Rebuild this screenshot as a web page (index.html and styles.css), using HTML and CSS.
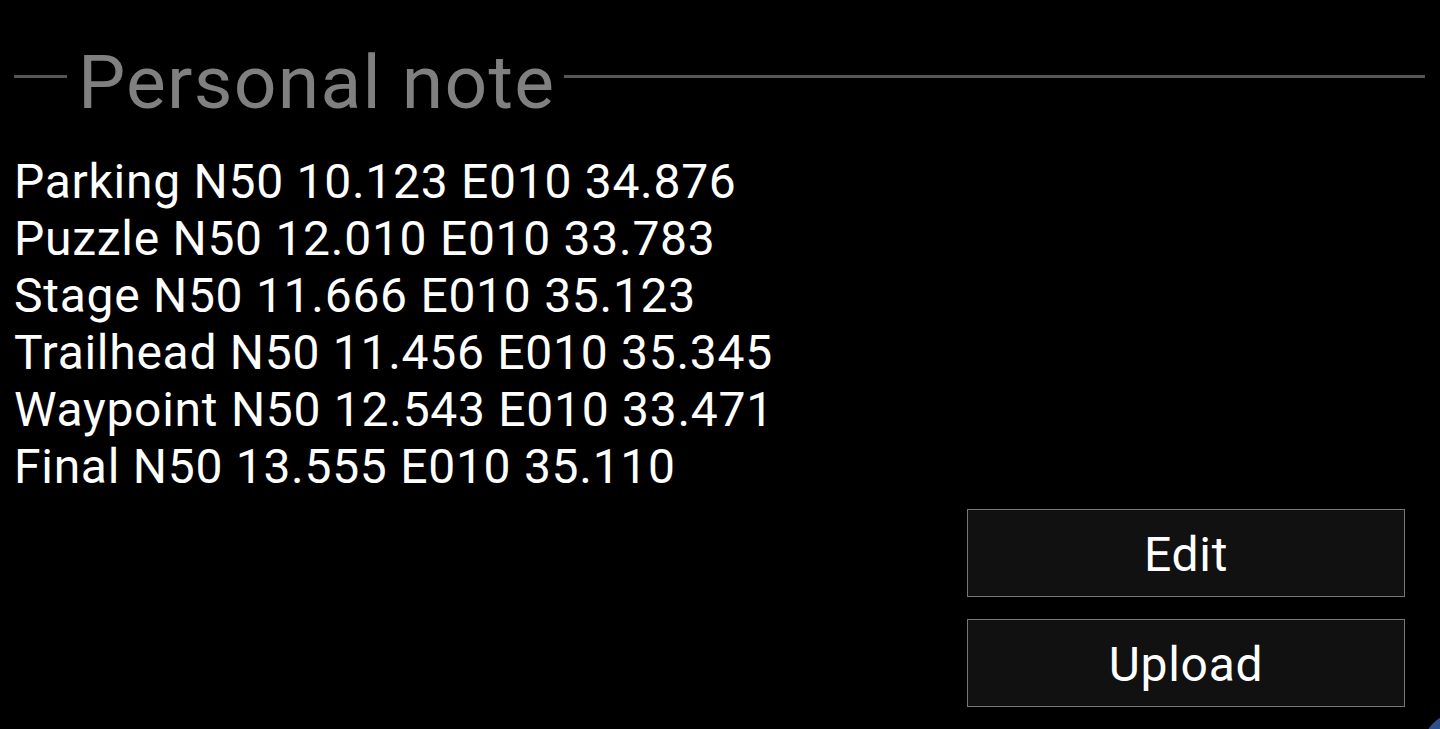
FILE: index.html
```html
<!DOCTYPE html>
<html lang="en">
<head>
<meta charset="utf-8">
<title>Personal note</title>
<link rel="stylesheet" href="styles.css">
</head>
<body>
<main class="screen">
  <header class="section-head">
    <span class="rule rule-left"></span>
    <h1 class="section-title">Personal note</h1>
    <span class="rule rule-right"></span>
  </header>
  <div class="note">
    <div class="note-line">Parking N50 10.123 E010 34.876</div>
    <div class="note-line">Puzzle N50 12.010 E010 33.783</div>
    <div class="note-line">Stage N50 11.666 E010 35.123</div>
    <div class="note-line">Trailhead N50 11.456 E010 35.345</div>
    <div class="note-line">Waypoint N50 12.543 E010 33.471</div>
    <div class="note-line">Final N50 13.555 E010 35.110</div>
  </div>
  <div class="actions">
    <button class="btn" type="button">Edit</button>
    <button class="btn" type="button">Upload</button>
  </div>
  <div class="fab"></div>
</main>
</body>
</html>
```

FILE: styles.css
```css
html, body {
  margin: 0;
  padding: 0;
  background: #000;
  height: 100%;
  overflow: hidden;
}

.screen {
  position: relative;
  width: 1440px;
  height: 729px;
  font-family: Roboto, "Noto Sans", sans-serif;
  color: #fff;
  overflow: hidden;
}

.section-head {
  display: flex;
  align-items: flex-start;
  padding: 38px 15px 0 14px;
  height: 88px;
}

.rule {
  display: block;
  height: 3px;
  background: #555;
  margin-top: 37px;
}

.rule-left {
  width: 53px;
  flex: none;
}

.rule-right {
  flex: 1;
}

.section-title {
  margin: 0 9px 0 11px;
  font-size: 75px;
  font-weight: 400;
  line-height: 88px;
  letter-spacing: 1.25px;
  color: #808080;
  white-space: nowrap;
}

.note {
  padding: 27px 0 0 14px;
}

.note-line {
  font-size: 48px;
  line-height: 57px;
  letter-spacing: 0.72px;
  color: #fff;
  white-space: nowrap;
}

.actions {
  display: flex;
  flex-direction: column;
  align-items: flex-end;
  gap: 22px;
  padding: 14px 35px 0 0;
}

.btn {
  width: 438px;
  height: 88px;
  background: #111;
  border: 1px solid #777;
  border-radius: 0;
  color: #fff;
  font-family: Roboto, "Noto Sans", sans-serif;
  font-size: 48px;
  letter-spacing: 0.72px;
  line-height: 1;
  padding: 4px 0 0;
}

.fab {
  position: absolute;
  left: 1422px;
  top: 712px;
  width: 76px;
  height: 76px;
  border-radius: 50%;
  background: #2e4f8f;
}
```
